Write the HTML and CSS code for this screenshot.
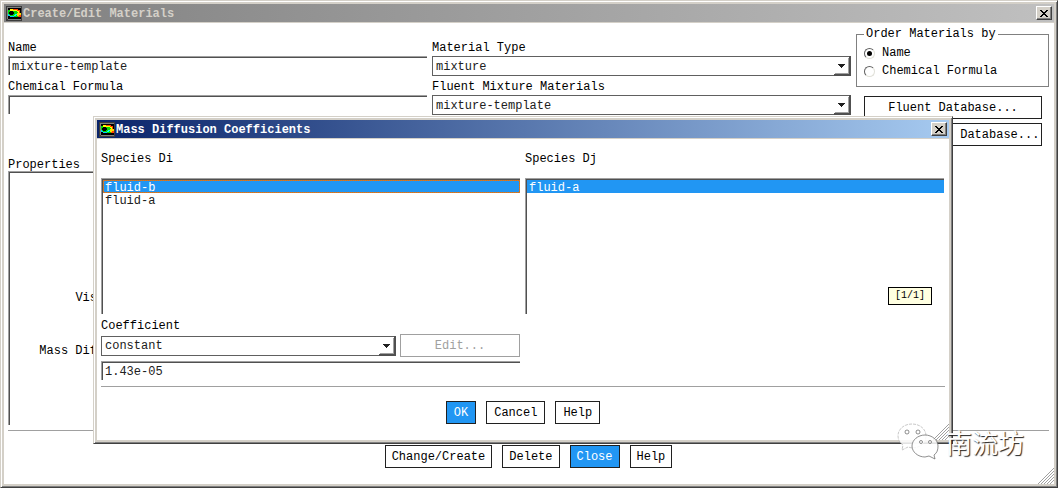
FILE: index.html
```
<!DOCTYPE html>
<html lang="en">
<head>
<meta charset="utf-8">
<title>Create/Edit Materials</title>
<link rel="stylesheet" href="styles.css">
</head>
<body>
<svg class="defs" aria-hidden="true">
  <symbol id="app-icon" viewBox="0 0 16 15">
    <rect width="16" height="15" fill="#3c3c3c"/>
    <path d="M1 1h14v1H2v11H1zM2 13h13v1H2z" fill="#808080"/>
    <rect x="2" y="2" width="13" height="11" fill="#000"/>
    <path d="M2 4h2V3h8v1h2v3h1v4H7v-1H3V9H2z" fill="#0d0"/>
    <path d="M4 3h8v1h2v3h-2V6h-1V5H4z" fill="#ff0"/>
    <path d="M7 3h5v1h2v3h-1V5h-2V4H7z" fill="#f40"/>
    <path d="M11 7h4v2h-1v1h-3z" fill="#fd0"/>
    <path d="M13 9h2v2h-3v-1h1z" fill="#f40"/>
    <path d="M2 8h1v1h1v1h4v1H4v-1H2z" fill="#0cf"/>
    <path d="M4 5h3v1h1v2H7v1H4V8H3V6h1z" fill="#000"/>
    <path d="M9 8h2v1h-1v1H8V9h1z" fill="#0ff"/>
  </symbol>
  <symbol id="cross" viewBox="0 0 8 7">
    <path d="M0 0h2v1h1v1h2V1h1V0h2v1H7v1H6v1H5v1h1v1h1v1h1v1H6V6H5V5H3v1H2v1H0V6h1V5h1V4h1V3H2V2H1V1H0z" fill="#000"/>
  </symbol>
  <symbol id="arrow" viewBox="0 0 18 20">
    <path d="M15 2h1v16H2v-1h13z" fill="#a0a0a0"/>
    <path d="M16 0h2v20H1v-2h15z" fill="#505050"/>
    <path d="M5 8h7v1h-1v1h-1v1H9v1H8v-1H7v-1H6V9H5z" fill="#202020"/>
  </symbol>
  <symbol id="grip" viewBox="0 0 16 16">
    <path d="M0 16L16 0M3 16L16 3M6 16L16 6M9 16L16 9M12 16L16 12" stroke="#a0a0a0" fill="none"/>
  </symbol>
</svg>

<main class="window window-main">
  <header class="titlebar titlebar-inactive">
    <svg class="app-icon" aria-hidden="true"><use href="#app-icon"/></svg>
    <h1 class="title">Create/Edit Materials</h1>
    <button class="close" type="button" aria-label="Close window"><svg class="cross"><use href="#cross"/></svg></button>
  </header>
  <div class="main-body">
    <div class="top">
      <div class="fields">
        <label class="label" for="name">Name</label>
        <input class="text" id="name" type="text" value="mixture-template">
        <label class="label" for="formula">Chemical Formula</label>
        <input class="text" id="formula" type="text" value="">
      </div>
      <div class="fields">
        <label class="label" for="type">Material Type</label>
        <div class="combo">
          <select class="select" id="type"><option>mixture</option></select>
          <svg class="arrow" aria-hidden="true"><use href="#arrow"/></svg>
        </div>
        <label class="label" for="mixture">Fluent Mixture Materials</label>
        <div class="combo">
          <select class="select" id="mixture"><option>mixture-template</option></select>
          <svg class="arrow" aria-hidden="true"><use href="#arrow"/></svg>
        </div>
      </div>
      <div class="side">
        <fieldset class="order">
          <legend class="legend">Order Materials by</legend>
          <label class="choice"><input class="radio" type="radio" name="order" checked>Name</label>
          <label class="choice"><input class="radio" type="radio" name="order">Chemical Formula</label>
        </fieldset>
        <div class="databases">
          <button class="button button-wide" type="button">Fluent Database...</button>
          <button class="button button-wide" type="button">User-Defined Database...</button>
        </div>
      </div>
    </div>
    <h2 class="properties-title">Properties</h2>
    <div class="properties">
      <span class="property">Viscosity (kg/m-s)</span>
      <span class="property">Mass Diffusivity (m2/s)</span>
    </div>
    <hr class="rule">
    <div class="actions actions-main">
      <button class="button" type="button">Change/Create</button>
      <button class="button" type="button">Delete</button>
      <button class="button button-primary" type="button">Close</button>
      <button class="button" type="button">Help</button>
    </div>
  </div>
  <svg class="grip" aria-hidden="true"><use href="#grip"/></svg>
</main>

<section class="window dialog" role="dialog" aria-labelledby="dialog-title">
  <header class="titlebar titlebar-active">
    <svg class="app-icon" aria-hidden="true"><use href="#app-icon"/></svg>
    <h2 class="title" id="dialog-title">Mass Diffusion Coefficients</h2>
    <button class="close" type="button" aria-label="Close dialog"><svg class="cross"><use href="#cross"/></svg></button>
  </header>
  <div class="dialog-body">
    <div class="species">
      <div>
        <h3 class="species-title" id="di">Species Di</h3>
        <ul class="list" role="listbox" aria-labelledby="di">
          <li class="item item-selected item-focused" role="option" aria-selected="true">fluid-b</li>
          <li class="item" role="option" aria-selected="false">fluid-a</li>
        </ul>
      </div>
      <div>
        <h3 class="species-title" id="dj">Species Dj</h3>
        <ul class="list" role="listbox" aria-labelledby="dj">
          <li class="item item-selected" role="option" aria-selected="true">fluid-a</li>
        </ul>
      </div>
      <div class="coefficient">
        <label class="label" for="coefficient">Coefficient</label>
        <div class="coefficient-row">
          <div class="combo combo-grow">
            <select class="select" id="coefficient"><option>constant</option></select>
            <svg class="arrow" aria-hidden="true"><use href="#arrow"/></svg>
          </div>
          <button class="button button-edit" type="button" disabled>Edit...</button>
        </div>
        <input class="text" type="text" value="1.43e-05" aria-label="Coefficient value">
      </div>
    </div>
    <hr class="rule">
    <div class="actions actions-dialog">
      <button class="button button-primary" type="button">OK</button>
      <button class="button" type="button">Cancel</button>
      <button class="button" type="button">Help</button>
    </div>
  </div>
  <div class="tooltip" role="tooltip">[1/1]</div>
  <svg class="grip" aria-hidden="true"><use href="#grip"/></svg>
</section>

<div class="watermark">
  <svg class="chat" viewBox="0 0 42 37" aria-hidden="true">
    <path class="bubble" d="M15 1C7 1 1 6 1 13c0 4 2 7 5 9l-1 5 6-3 4 1c8 0 14-5 14-12S23 1 15 1z"/>
    <path class="bubble bubble-front" d="M28 12c-7 0-13 5-13 11s6 11 13 11l4-1 6 3-1-4c3-2 4-5 4-9 0-6-6-11-13-11z"/>
    <g class="eyes"><circle cx="10" cy="9" r="2"/><circle cx="21" cy="9" r="2"/><circle cx="24" cy="19" r="1.5"/><circle cx="33" cy="19" r="1.5"/></g>
  </svg>
  <span class="brand" lang="zh-CN">南流坊</span>
</div>
</body>
</html>
```
FILE: styles.css
```
*, *::before { box-sizing: border-box; }

body {
  margin: 0;
  position: relative;
  background: #fff;
  color: #000;
  font: 12px/14px "Liberation Mono", monospace;
}

h1, h2, h3, ul, fieldset, hr { margin: 0; padding: 0; font: inherit; }
button, input, select { margin: 0; font: inherit; color: inherit; border-radius: 0; }
.defs { position: absolute; width: 0; height: 0; }

/* Window frames */
.window {
  display: flex;
  flex-direction: column;
  background: #fff;
  border: 1px solid;
  border-color: #d4d0c8 #404040 #404040 #d4d0c8;
  padding: 3px;
  box-shadow: inset 1px 1px #fff, inset -1px -1px #808080, inset 0 0 0 3px #d4d0c8;
}
.window-main { position: relative; min-height: 100vh; }
.dialog { position: absolute; top: 116px; left: 93px; right: 105px; }

.titlebar {
  display: flex;
  align-items: center;
  gap: 1px;
  height: 19px;
  padding: 0 2px;
  border-bottom: 1px solid #d4d0c8;
  font-weight: bold;
}
.titlebar-inactive { background: linear-gradient(to right, #808080, #c0c0c0); color: #d4d0c8; }
.titlebar-active { background: linear-gradient(to right, #0a246a, #a6caf0); color: #fff; }
.title { flex: 1; padding-top: 1px; font-weight: bold; }
.app-icon { width: 16px; height: 15px; }
.close {
  display: grid;
  place-items: center;
  width: 16px;
  height: 14px;
  padding: 0;
  background: #d4d0c8;
  border: 1px solid;
  border-color: #fff #404040 #404040 #fff;
  box-shadow: inset -1px -1px #808080;
}
.cross { width: 8px; height: 7px; }
.grip { position: absolute; right: 3px; bottom: 3px; width: 16px; height: 16px; }

/* Form controls */
.label { display: block; padding: 1px 0; }
.text {
  display: block;
  width: 100%;
  height: 19px;
  padding: 2px 3px 0;
  background: #fff;
  border: 0 solid #a0a0a0;
  border-width: 1px 0 0 1px;
  box-shadow: inset 1px 1px #505050;
  outline: 0;
  color: #202020;
}
.combo { position: relative; }
.combo-grow { flex: 1; }
.select {
  appearance: none;
  display: block;
  width: 100%;
  height: 20px;
  padding: 1px 18px 0 3px;
  background: #fff;
  border: 1px solid #606060;
  color: #202020;
}
.arrow { position: absolute; top: 0; right: 0; width: 18px; height: 20px; pointer-events: none; }
.button {
  height: 23px;
  padding: 1px 6px 0;
  background: #fff;
  border: 1px solid #202020;
  white-space: nowrap;
}
.button-primary { background: #2196f3; color: #fff; }
.button-wide { padding: 1px 0 0; }
.button-edit { width: 120px; border-color: #a0a0a0; color: #a0a0a0; }
.rule { border: 0; height: 1px; background: #a0a0a0; }
.actions { display: flex; justify-content: center; gap: 10px; }

/* Materials window */
.main-body { flex: 1; display: flex; flex-direction: column; padding: 3px 5px 16px 4px; }
.top { display: grid; grid-template-columns: 1fr 1fr 193px; gap: 5px; }
.fields { display: grid; grid-template-rows: 16px 23px 16px 23px; align-content: start; padding-top: 14px; }
.order { border: 1px solid #808080; padding: 2px 7px 6px; }
.legend { padding: 0 2px; line-height: 16px; }
.choice { display: flex; align-items: center; gap: 7px; height: 18px; }
.radio {
  appearance: none;
  display: grid;
  place-items: center;
  width: 11px;
  height: 11px;
  border: 1px solid;
  border-color: #606060 #e0e0d8 #e0e0d8 #606060;
  border-radius: 50%;
}
.radio:checked::before { content: ""; width: 5px; height: 5px; border-radius: 50%; background: #000; }
.databases { display: grid; grid-template-columns: minmax(0, 1fr); gap: 4px; padding: 9px 7px 0 8px; }
.properties-title { padding-top: 12px; margin-bottom: -1px; }
.properties {
  flex: 1;
  display: flex;
  flex-direction: column;
  gap: 39px;
  width: 90%;
  padding-top: 119px;
  margin-bottom: 5px;
  border: 0 solid #a0a0a0;
  border-width: 1px 0 0 1px;
  box-shadow: inset 1px 1px #505050;
}
.property { width: 196px; text-align: right; }
.actions-main { padding-top: 14px; }

/* Diffusion dialog */
.dialog-body { padding: 13px 4px 16px; }
.species { display: grid; grid-template-columns: 1fr 1fr; gap: 4px 5px; padding-right: 1px; }
.species-title { padding-bottom: 12px; }
.list {
  height: 136px;
  padding: 1px 0 0 1px;
  list-style: none;
  border: 0 solid #a0a0a0;
  border-width: 1px 0 0 1px;
  box-shadow: inset 1px 1px #505050;
  color: #202020;
}
.item { height: 13px; padding-left: 2px; line-height: 16px; }
.item-selected { background: #2196f3; color: #fff; }
/* Focus ring of alternating pixels, as in classic list boxes */
.item-focused {
  padding-left: 1px;
  border: 1px solid transparent;
  background:
    linear-gradient(#2196f3, #2196f3) padding-box,
    repeating-conic-gradient(#f07000 0 25%, #a08060 0 50%) 0 0 / 2px 2px border-box;
  line-height: 14px;
}
.coefficient-row { display: flex; align-items: center; gap: 4px; padding-bottom: 4px; }
.dialog .rule { margin-top: 6px; }
.actions-dialog { padding-top: 14px; }
.actions-dialog .button { padding: 1px 7px 0; }
.tooltip {
  position: absolute;
  top: 170px;
  right: 20px;
  padding: 1px 6px;
  background: #ffffe1;
  border: 1px solid #000;
  font-size: 10px;
}

/* Account mark */
.watermark {
  position: absolute;
  right: 34px;
  bottom: 28px;
  display: flex;
  align-items: center;
  gap: 7px;
}
.chat { width: 42px; height: 37px; }
.bubble { fill: #fff; fill-opacity: .85; stroke: #b0b0b0; stroke-width: .7; stroke-dasharray: 3 1; }
.bubble-front { stroke: #606060; stroke-dasharray: none; }
.eyes { fill: #fff; stroke: #606060; stroke-width: .7; }
.brand {
  font: 26px/37px "Noto Sans CJK SC", sans-serif;
  color: #fff;
  text-shadow: 1px 1px 1px #202020;
}
```
